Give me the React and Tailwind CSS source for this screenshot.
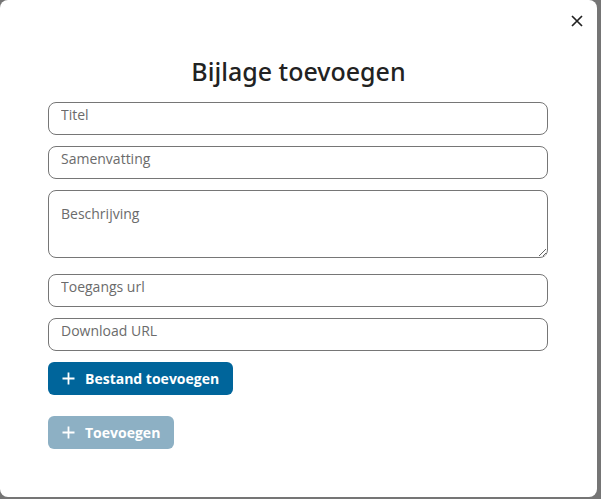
import React from 'react';

const fieldCls =
  'w-[500px] h-[33px] rounded-lg border border-[#767676] bg-white px-3 pt-[3px] pb-3 text-[14px] text-[#5f5f5f] placeholder:text-[#6b6b6b] outline-none';

const PlusIcon = () => (
  <svg width="13" height="13" viewBox="0 0 13 13" fill="none" stroke="currentColor" strokeWidth="1.8">
    <path d="M6.5 0.5v12M0.5 6.5h12" />
  </svg>
);

export default function App() {
  return (
    <div className="w-[601px] h-[499px] bg-[#757575]" style={{ fontFamily: '"Open Sans", "Noto Sans", sans-serif' }}>
      <div className="relative w-[597px] h-[497px] bg-white rounded-lg">
        <button className="absolute right-[14px] top-[15px] text-[#222]">
          <svg width="12" height="12" viewBox="0 0 12 12" stroke="currentColor" strokeWidth="1.7">
            <path d="M1 1l10 10M11 1L1 11" />
          </svg>
        </button>

        <div className="flex flex-col pt-[55px] px-12">
          <h2 className="text-center text-[25px] font-['Noto_Sans',sans-serif] font-medium text-[#222] leading-8 mb-[15px]">Bijlage toevoegen</h2>

          <div className="flex flex-col gap-[11px]">
            <input className={fieldCls} placeholder="Titel" />
            <input className={fieldCls} placeholder="Samenvatting" />
            <textarea
              className="w-[500px] h-[68px] rounded-lg border border-[#767676] bg-white px-3 pt-[12px] text-[14px] placeholder:text-[#6b6b6b] outline-none mb-[5px] block"
              placeholder="Beschrijving"
            />
            <input className={fieldCls} placeholder="Toegangs url" />
            <input className={fieldCls} placeholder="Download URL" />
          </div>

          <div className="mt-[11px]">
            <button className="flex items-center gap-[10px] h-[33px] px-[14px] rounded-md bg-[#00659b] text-white text-[14px] font-bold">
              <PlusIcon />
              Bestand toevoegen
            </button>
          </div>

          <div className="mt-[21px]">
            <button className="flex items-center gap-[10px] h-[33px] px-[14px] rounded-md bg-[#8db0c4] text-white text-[14px] font-bold">
              <PlusIcon />
              Toevoegen
            </button>
          </div>
        </div>
      </div>
    </div>
  );
}
